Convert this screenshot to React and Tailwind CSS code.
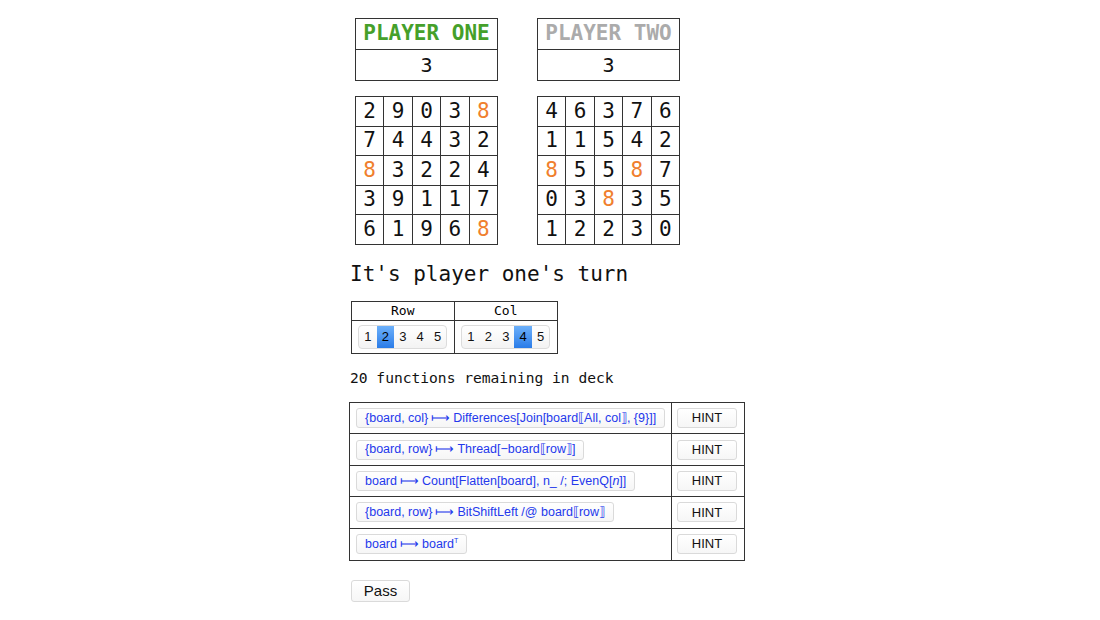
import React from 'react'

const mono = { fontFamily: '"DejaVu Sans Mono", "Liberation Mono", monospace' }
const sans = { fontFamily: '"Liberation Sans", Arial, sans-serif' }

const boardOne = [
  [2, 9, 0, 3, 8],
  [7, 4, 4, 3, 2],
  [8, 3, 2, 2, 4],
  [3, 9, 1, 1, 7],
  [6, 1, 9, 6, 8],
]
const boardTwo = [
  [4, 6, 3, 7, 6],
  [1, 1, 5, 4, 2],
  [8, 5, 5, 8, 7],
  [0, 3, 8, 3, 5],
  [1, 2, 2, 3, 0],
]

function ScoreBox({ name, score, active }) {
  return (
    <div className="w-[143px] border border-[#333]" style={mono}>
      <div
        className={`h-[31px] flex items-center justify-center text-[21px] font-bold border-b border-[#333] ${
          active ? 'text-[#45a02a]' : 'text-[#ababab]'
        }`}
      >
        {name}
      </div>
      <div className="h-[30px] flex items-center justify-center text-[20px] text-[#111]">{score}</div>
    </div>
  )
}

function Board({ rows }) {
  return (
    <div className="w-[143px] grid grid-cols-5 border-l border-t border-[#333]" style={mono}>
      {rows.flat().map((n, i) => (
        <div
          key={i}
          className={`h-[29.6px] flex items-center justify-center border-r border-b border-[#333] text-[21px] ${
            n === 8 ? 'text-[#f07f2e]' : 'text-[#111]'
          }`}
        >
          {n}
        </div>
      ))}
    </div>
  )
}

function Setter({ value }) {
  return (
    <div
      className="flex h-[24px] rounded-[4px] border border-[#dcdcdc] bg-gradient-to-b from-white to-[#f3f3f3] overflow-hidden text-[13px] text-[#111]"
      style={sans}
    >
      {[1, 2, 3, 4, 5].map((n) => (
        <div
          key={n}
          className={`w-[17.4px] flex items-center justify-center ${
            n === value ? 'bg-gradient-to-b from-[#6cb0fa] to-[#2a7ce8] text-black' : ''
          }`}
        >
          {n}
        </div>
      ))}
    </div>
  )
}

const Arrow = () => <span className="mx-[3px]">⟼</span>

const functions = [
  <>{'{board, col}'}<Arrow />Differences[Join[board⟦All, col⟧, {'{9}'}]]</>,
  <>{'{board, row}'}<Arrow />Thread[−board⟦row⟧]</>,
  <>board<Arrow />Count[Flatten[board], n_ /; EvenQ[<i>n</i>]]</>,
  <>{'{board, row}'}<Arrow />BitShiftLeft /@ board⟦row⟧</>,
  <>board<Arrow />board<sup className="text-[7px] relative -top-[3px]">T</sup></>,
]

export default function App() {
  return (
    <div className="min-h-[620px] bg-white">
      <div className="w-[402px] mx-auto pt-[18px]">
        <div className="flex gap-[39px] pl-[6px]">
          <ScoreBox name="PLAYER ONE" score={3} active />
          <ScoreBox name="PLAYER TWO" score={3} />
        </div>
        <div className="flex gap-[39px] pl-[6px] mt-[15px]">
          <Board rows={boardOne} />
          <Board rows={boardTwo} />
        </div>

        <div className="mt-[17px] leading-[24px] text-[21px] text-[#111] pl-[1px]" style={mono}>
          It's player one's turn
        </div>

        <div className="mt-[15px] ml-[2px] w-[207px] border border-[#333] grid grid-cols-2" style={mono}>
          <div className="h-[19px] flex items-center justify-center text-[13px] border-b border-r border-[#333]">Row</div>
          <div className="h-[19px] flex items-center justify-center text-[13px] border-b border-[#333]">Col</div>
          <div className="h-[32px] flex items-center justify-center border-r border-[#333]">
            <Setter value={2} />
          </div>
          <div className="h-[32px] flex items-center justify-center">
            <Setter value={4} />
          </div>
        </div>

        <div className="mt-[14px] leading-[20px] text-[14.6px] text-[#111] pl-[1px]" style={mono}>
          20 functions remaining in deck
        </div>

        <div className="mt-[14px] w-[396px] border border-[#333]" style={sans}>
          {functions.map((f, i) => (
            <div key={i} className={`flex h-[31.4px] ${i < functions.length - 1 ? 'border-b border-[#333]' : ''}`}>
              <div className="w-[322px] border-r border-[#333] flex items-center pl-[6px]">
                <div className="h-[20px] px-[8px] flex items-center rounded-[3px] border border-[#dadada] bg-gradient-to-b from-white to-[#f6f6f6] text-[12.5px] text-[#2438ec] whitespace-nowrap">
                  {f}
                </div>
              </div>
              <div className="flex-1 flex items-center justify-center pr-[2px]">
                <div className="w-[60px] h-[20px] flex items-center justify-center rounded-[3px] border border-[#dadada] bg-gradient-to-b from-white to-[#f6f6f6] text-[13px] text-[#111]">
                  HINT
                </div>
              </div>
            </div>
          ))}
        </div>

        <div
          className="mt-[19px] ml-[2px] w-[59px] h-[22px] flex items-center justify-center rounded-[3px] border border-[#dadada] bg-gradient-to-b from-white to-[#f6f6f6] text-[15px] text-[#111]"
          style={sans}
        >
          Pass
        </div>
      </div>
    </div>
  )
}
